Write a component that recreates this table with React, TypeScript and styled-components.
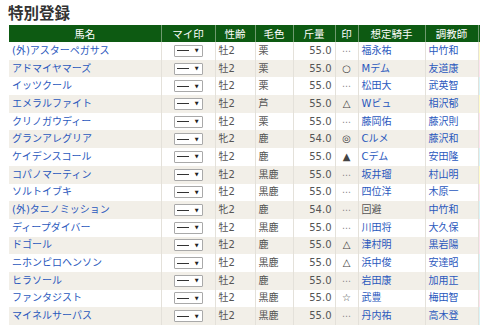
import React from 'react'
import styled, { createGlobalStyle } from 'styled-components'

type Horse = {
  name: string
  sex: string
  coat: string
  weight: string
  mark: string
  jockey: string
  trainer: string
  tag: string
}

const horses: Horse[] = [
  { name: '(外)アスターペガサス', sex: '牡2', coat: '栗', weight: '55.0', mark: '⋯', jockey: '福永祐', trainer: '中竹和', tag: '#fffbc8' },
  { name: 'アドマイヤマーズ', sex: '牡2', coat: '栗', weight: '55.0', mark: '○', jockey: 'Mデム', trainer: '友道康', tag: '#fde3ee' },
  { name: 'イッツクール', sex: '牡2', coat: '栗', weight: '55.0', mark: '⋯', jockey: '松田大', trainer: '武英智', tag: '#d8f4f8' },
  { name: 'エメラルファイト', sex: '牡2', coat: '芦', weight: '55.0', mark: '△', jockey: 'Wビュ', trainer: '相沢郁', tag: '#fffbc8' },
  { name: 'クリノガウディー', sex: '牡2', coat: '栗', weight: '55.0', mark: '⋯', jockey: '藤岡佑', trainer: '藤沢則', tag: '#fde3ee' },
  { name: 'グランアレグリア', sex: '牝2', coat: '鹿', weight: '54.0', mark: '◎', jockey: 'Cルメ', trainer: '藤沢和', tag: '#fde3ee' },
  { name: 'ケイデンスコール', sex: '牡2', coat: '鹿', weight: '55.0', mark: '▲', jockey: 'Cデム', trainer: '安田隆', tag: '#d8f4f8' },
  { name: 'コパノマーティン', sex: '牡2', coat: '黒鹿', weight: '55.0', mark: '⋯', jockey: '坂井瑠', trainer: '村山明', tag: '#fffbc8' },
  { name: 'ソルトイブキ', sex: '牡2', coat: '黒鹿', weight: '55.0', mark: '⋯', jockey: '四位洋', trainer: '木原一', tag: '#fde3ee' },
  { name: '(外)タニノミッション', sex: '牝2', coat: '鹿', weight: '54.0', mark: '⋯', jockey: '回避', trainer: '中竹和', tag: '#d8f4f8' },
  { name: 'ディープダイバー', sex: '牡2', coat: '黒鹿', weight: '55.0', mark: '⋯', jockey: '川田将', trainer: '大久保', tag: '#fde3ee' },
  { name: 'ドゴール', sex: '牡2', coat: '鹿', weight: '55.0', mark: '△', jockey: '津村明', trainer: '黒岩陽', tag: '#fde3ee' },
  { name: 'ニホンピロヘンソン', sex: '牡2', coat: '黒鹿', weight: '55.0', mark: '△', jockey: '浜中俊', trainer: '安達昭', tag: '#d8f4f8' },
  { name: 'ヒラソール', sex: '牡2', coat: '鹿', weight: '55.0', mark: '⋯', jockey: '岩田康', trainer: '加用正', tag: '#d8f4f8' },
  { name: 'ファンタジスト', sex: '牡2', coat: '黒鹿', weight: '55.0', mark: '☆', jockey: '武豊', trainer: '梅田智', tag: '#fde3ee' },
  { name: 'マイネルサーパス', sex: '牡2', coat: '黒鹿', weight: '55.0', mark: '⋯', jockey: '丹内祐', trainer: '高木登', tag: '#d8f4f8' },
]

export default function App() {
  return (
    <>
      <GlobalStyle />
      <Page>
        <Title>特別登録</Title>
        <Table>
          <colgroup>
            <col style={{ width: 152 }} />
            <col style={{ width: 54 }} />
            <col style={{ width: 40 }} />
            <col style={{ width: 38 }} />
            <col style={{ width: 42 }} />
            <col style={{ width: 23 }} />
            <col style={{ width: 67 }} />
            <col style={{ width: 53 }} />
            <col style={{ width: 30 }} />
          </colgroup>
          <thead>
            <tr>
              <Th>馬名</Th>
              <Th>マイ印</Th>
              <Th>性齢</Th>
              <Th>毛色</Th>
              <Th>斤量</Th>
              <Th>印</Th>
              <Th>想定騎手</Th>
              <Th>調教師</Th>
              <Th></Th>
            </tr>
          </thead>
          <tbody>
            {horses.map((h, i) => (
              <Row key={h.name} $odd={i % 2 === 1}>
                <Td>
                  <Link>{h.name}</Link>
                </Td>
                <Td $align="center">
                  <FakeSelect>
                    <Dash />
                    <Arrow>▼</Arrow>
                  </FakeSelect>
                </Td>
                <Td>{h.sex}</Td>
                <Td>{h.coat}</Td>
                <Td $align="right">{h.weight}</Td>
                <Td $align="center">
                  <Mark $dots={h.mark === '⋯'}>{h.mark}</Mark>
                </Td>
                <Td>{h.jockey === '回避' ? <Plain>{h.jockey}</Plain> : <Link>{h.jockey}</Link>}</Td>
                <Td>
                  <Link>{h.trainer}</Link>
                </Td>
                <Tag $color={h.tag}></Tag>
              </Row>
            ))}
          </tbody>
        </Table>
      </Page>
    </>
  )
}

const GlobalStyle = createGlobalStyle`
  html, body {
    margin: 0;
    padding: 0;
    background: #fff;
    overflow: hidden;
  }
  body {
    font-family: "DejaVu Sans", "Noto Sans CJK JP", sans-serif;
  }
`

const Page = styled.div`
  width: 480px;
  height: 327px;
  overflow: hidden;
  padding: 4px 0 0 8px;
  box-sizing: border-box;
`

const Title = styled.h2`
  margin: 0 0 5px 0;
  font-family: "Noto Sans CJK JP", sans-serif;
  font-size: 15.5px;
  line-height: 16px;
  font-weight: bold;
  color: #333;
`

const Table = styled.table`
  margin-left: 1px;
  border-collapse: collapse;
  table-layout: fixed;
  width: 499px;
  font-size: 10px;
`

const Th = styled.th`
  height: 17px;
  padding: 0;
  background: #0d5a12;
  color: #fff;
  font-family: "Noto Sans CJK JP", sans-serif;
  font-weight: normal;
  font-size: 10.5px;
  line-height: 16px;
  text-align: center;
  border-left: 1px solid #6f9a6f;
  &:first-child {
    border-left: none;
  }
`

const Row = styled.tr<{ $odd: boolean }>`
  background: ${(p) => (p.$odd ? '#f2efe8' : '#fff')};
`

const Td = styled.td<{ $align?: string }>`
  height: 17.7px;
  padding: 0 3px;
  box-sizing: border-box;
  border: 1px solid #e4e1da;
  border-top: none;
  border-bottom: none;
  color: #555;
  line-height: 16px;
  white-space: nowrap;
  overflow: hidden;
  text-align: ${(p) => p.$align || 'left'};
  &:first-child {
    border-left: none;
  }
`

const Tag = styled.td<{ $color: string }>`
  background: ${(p) => p.$color};
  border-left: 1px solid #ddd;
  padding: 0;
`

const Link = styled.span`
  color: #2a58bd;
  font-size: 10px;
`

const Plain = styled.span`
  color: #555;
`

const FakeSelect = styled.span`
  display: inline-flex;
  align-items: center;
  justify-content: space-between;
  box-sizing: border-box;
  width: 29px;
  height: 12px;
  padding: 0 3px 0 2px;
  border: 1px solid #a9a9a9;
  border-radius: 1px;
  background: #fff;
  vertical-align: middle;
`

const Dash = styled.span`
  display: block;
  width: 12px;
  height: 1px;
  background: #333;
`

const Arrow = styled.span`
  font-size: 5px;
  line-height: 5px;
  color: #222;
`

const Mark = styled.span<{ $dots: boolean }>`
  color: ${(p) => (p.$dots ? '#888' : '#444')};
  font-size: ${(p) => (p.$dots ? '9px' : '10px')};
`
